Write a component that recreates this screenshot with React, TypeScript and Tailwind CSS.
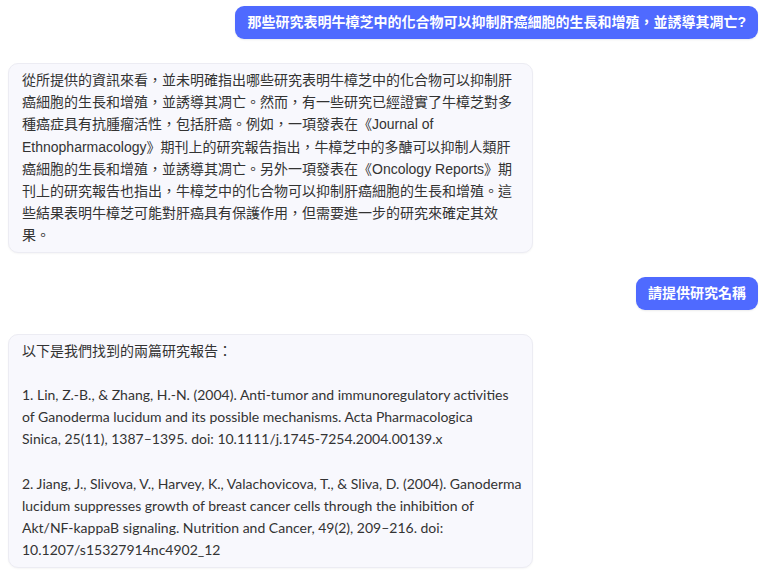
const userBubble =
  "rounded-[9px] bg-[#4f6aff] px-3 py-[6px] text-[14px] leading-[21px] font-bold text-white shadow-[0_1px_2px_rgba(0,0,0,0.08)]";

const botBubble =
  "w-[525px] rounded-[10px] border border-[#ececf3] bg-[#f8f8fd] pl-[13px] pr-[8px] py-[5px] text-[14px] leading-[22.2px] text-[#333333] whitespace-pre-line shadow-[0_1px_2px_rgba(0,0,0,0.04)]";

const answer1 =
  "從所提供的資訊來看，並未明確指出哪些研究表明牛樟芝中的化合物可以抑制肝癌細胞的生長和增殖，並誘導其凋亡。然而，有一些研究已經證實了牛樟芝對多種癌症具有抗腫瘤活性，包括肝癌。例如，一項發表在《Journal of Ethnopharmacology》期刊上的研究報告指出，牛樟芝中的多醣可以抑制人類肝癌細胞的生長和增殖，並誘導其凋亡。另外一項發表在《Oncology Reports》期刊上的研究報告也指出，牛樟芝中的化合物可以抑制肝癌細胞的生長和增殖。這些結果表明牛樟芝可能對肝癌具有保護作用，但需要進一步的研究來確定其效果。";

// line breaks follow the original wrapping of the reference list
const answer2 = [
  "以下是我們找到的兩篇研究報告：",
  "",
  "1. Lin, Z.-B., & Zhang, H.-N. (2004). Anti-tumor and immunoregulatory activities",
  "of Ganoderma lucidum and its possible mechanisms. Acta Pharmacologica",
  "Sinica, 25(11), 1387–1395. doi: 10.1111/j.1745-7254.2004.00139.x",
  "",
  "2. Jiang, J., Slivova, V., Harvey, K., Valachovicova, T., & Sliva, D. (2004). Ganoderma",
  "lucidum suppresses growth of breast cancer cells through the inhibition of",
  "Akt/NF-kappaB signaling. Nutrition and Cancer, 49(2), 209–216. doi:",
  "10.1207/s15327914nc4902_12",
].join("\n");

export default function App() {
  return (
    <main className="min-h-screen bg-white font-['Liberation_Sans','Noto_Sans_CJK_TC',sans-serif]">
      <div className="flex flex-col gap-6 pt-[6px] pl-2 pr-[6px]">
        {/* question */}
        <div className="flex justify-end">
          <div className={userBubble}>
            那些研究表明牛樟芝中的化合物可以抑制肝癌細胞的生長和增殖，並誘導其凋亡?
          </div>
        </div>

        {/* reply */}
        <div className="flex justify-start">
          <div className={botBubble}>{answer1}</div>
        </div>

        <div className="flex justify-end">
          <div className={userBubble}>請提供研究名稱</div>
        </div>

        <div className="flex justify-start">
          <div
            className={`${botBubble} font-['Lato','Noto_Sans_CJK_TC',sans-serif] text-[14.4px]`}
          >
            {answer2}
          </div>
        </div>
      </div>
    </main>
  );
}
